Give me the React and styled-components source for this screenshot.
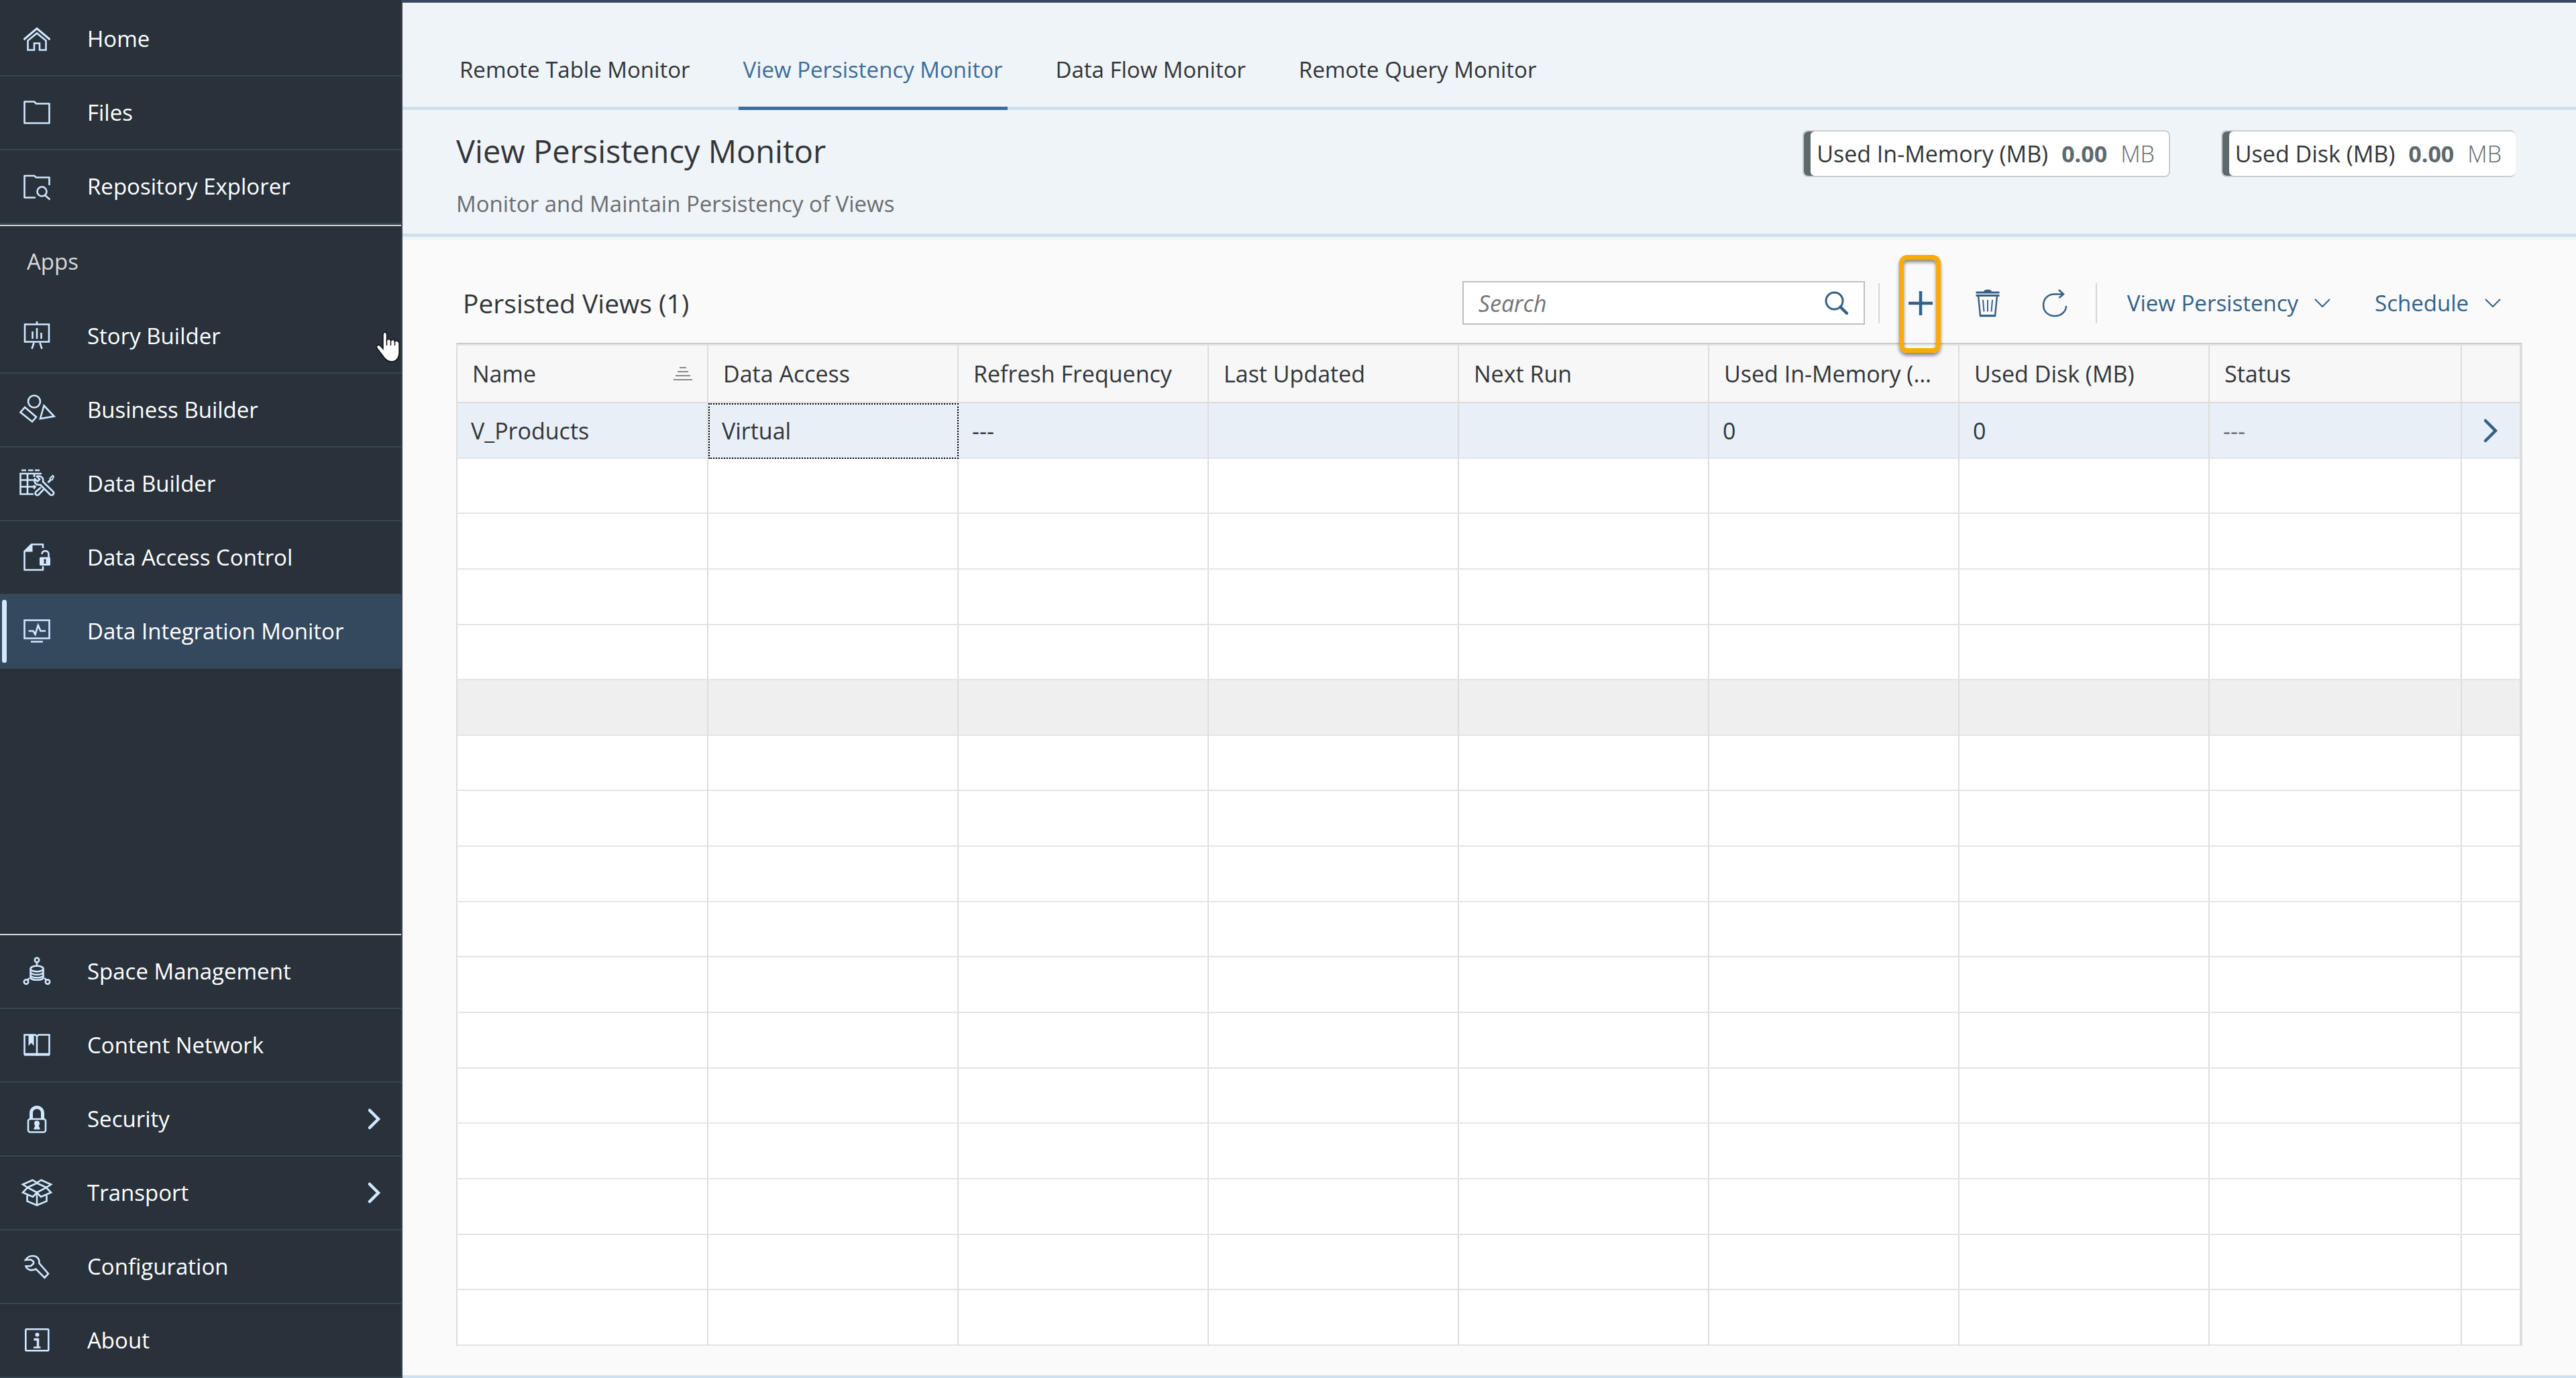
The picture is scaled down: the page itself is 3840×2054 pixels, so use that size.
import React from "react";
import styled, { createGlobalStyle } from "styled-components";

const GlobalStyle = createGlobalStyle`
  *, *::before, *::after { box-sizing: border-box; }
  body {
    margin: 0;
    font-family: "Open Sans", "Noto Sans", sans-serif;
    font-size: 33px;
    line-height: 46px;
    color: #323538;
    background: #fafafa;
  }
  button, input { font: inherit; color: inherit; }
`;

/* ---------- shell ---------- */

const Shell = styled.div`
  display: flex;
  height: 100vh;
  overflow: hidden;
`;

const Sidebar = styled.nav`
  flex: 0 0 600px;
  display: flex;
  flex-direction: column;
  justify-content: space-between;
  padding-top: 4px;
  background: #29313a;
  border-right: 2px solid #3a4552;
`;

const NavGroup = styled.div`
  display: flex;
  flex-direction: column;
  border-top: ${(p) => (p.$ruled ? "2px solid #d9d9d9" : "0")};
  margin-top: ${(p) => (p.$spaced ? "1px" : "0")};
`;

const NavHeading = styled.div`
  height: 110px;
  padding: 30px 40px;
  color: #d9d9d9;
`;

const NavLink = styled.a`
  position: relative;
  display: flex;
  align-items: center;
  gap: 47px;
  height: 110px;
  padding: 0 29px 0 27px;
  border-bottom: 2px solid #3a4552;
  background: ${(p) => (p.$active ? "#34495e" : "transparent")};
  color: #fff;
  text-decoration: none;

  &::before {
    content: "";
    display: ${(p) => (p.$active ? "block" : "none")};
    position: absolute;
    left: 3px;
    top: 7px;
    bottom: 7px;
    width: 7px;
    border-radius: 4px;
    background: #d1e8ff;
  }
`;

const NavLabel = styled.span`
  flex: 1;
  white-space: nowrap;
`;

const NavIcon = styled.svg`
  flex: none;
  width: 56px;
  height: 48px;
  fill: none;
  stroke: #d1e8ff;
  stroke-width: 2.6;
  .solid { fill: #d1e8ff; stroke: none; }
  .cut { fill: #29313a; stroke: none; }
  .cutline { fill: #29313a; }
  .heavy { stroke-width: 5; }
`;

const ExpandIcon = styled.svg`
  flex: none;
  width: 22px;
  height: 34px;
  fill: none;
  stroke: #d1e8ff;
`;

const Pointer = styled.svg`
  position: absolute;
  right: 0;
  top: 46px;
  width: 40px;
  height: 50px;
`;

/* ---------- main area ---------- */

const Main = styled.main`
  flex: 1;
  min-width: 0;
  display: flex;
  flex-direction: column;
  border-top: 4px solid #354a5f;
  border-bottom: 4px solid #d1e0ee;
`;

const TabBar = styled.div`
  display: flex;
  gap: 65px;
  padding-left: 78px;
  background: #eff4f9;
  box-shadow: inset 0 -5px #d1e0ee;
`;

const Tab = styled.button`
  padding: 77px 7px 32px;
  border: 0;
  border-bottom: 5px solid ${(p) => (p.$active ? "#3c6e99" : "transparent")};
  background: none;
  color: ${(p) => (p.$active ? "#3c6e99" : "#323538")};
  white-space: nowrap;
`;

const PageHeader = styled.header`
  display: flex;
  justify-content: space-between;
  align-items: flex-start;
  padding: 29px 90px 21px 80px;
  background: #eff4f9;
  border-bottom: 5px solid #d1e0ee;
  box-shadow: 0 5px #eff4f9;
`;

const Title = styled.h1`
  margin: 0;
  font-size: 47px;
  line-height: 64px;
  font-weight: 400;
`;

const Subtitle = styled.p`
  margin: 24px 0 0;
  color: #6a6d70;
`;

const Tags = styled.div`
  display: flex;
  gap: 76px;
`;

const Tag = styled.div`
  display: flex;
  align-items: center;
  gap: 20px;
  height: 70px;
  margin-top: 1px;
  padding: 0 21px 0 19px;
  border: 2px solid #c9cdd1;
  border-right-width: ${(p) => (p.$open ? "0" : "2px")};
  border-radius: 8px;
  background: #fff;
  box-shadow: inset 10px 0 #5e696e;
  font-size: 34px;
  white-space: nowrap;
`;

const TagValue = styled.strong`
  font-weight: 700;
  color: #5e696e;
`;

const TagUnit = styled.span`
  font-weight: 300;
  color: #5e696e;
`;

/* ---------- table panel ---------- */

const Panel = styled.section`
  flex: 1;
  min-height: 0;
  display: flex;
  flex-direction: column;
  padding: 66px 80px 44px;
`;

const Toolbar = styled.div`
  display: flex;
  align-items: center;
  height: 65px;
  margin-bottom: 27px;
`;

const PanelTitle = styled.h2`
  flex: 1;
  margin: 0;
  padding-left: 10px;
  font-size: 39px;
  font-weight: 400;
`;

const SearchBox = styled.label`
  display: flex;
  align-items: center;
  width: 600px;
  height: 65px;
  margin-right: 9px;
  padding: 0 20px 0 22px;
  border: 2px solid #bfbfbf;
  background: #fff;
`;

const SearchInput = styled.input`
  flex: 1;
  min-width: 0;
  padding: 0;
  border: 0;
  outline: 0;
  background: none;
  font-size: 34px;
  &::placeholder { font-style: italic; color: #757575; opacity: 1; }
`;

const ToolIcon = styled.svg`
  display: block;
  flex: none;
  width: ${(p) => p.$w || 40}px;
  height: ${(p) => p.$h || 44}px;
  fill: none;
  stroke: #346187;
  .solid { fill: #346187; stroke: none; }
`;

const Divider = styled.span`
  width: 2px;
  height: 60px;
  margin: 0 11px;
  background: #d3d8dc;
`;

const IconButton = styled.button`
  position: relative;
  display: flex;
  align-items: center;
  justify-content: center;
  width: 100px;
  height: 65px;
  padding: 0;
  border: 0;
  background: none;
`;

const Highlight = styled.span`
  position: absolute;
  left: 18px;
  top: -39px;
  width: 62px;
  height: 146px;
  border: 7px solid #f9ab06;
  border-radius: 12px;
  box-shadow: 0 4px 5px rgba(0, 0, 0, 0.45), inset 0 4px 5px rgba(0, 0, 0, 0.45);
`;

const MenuButton = styled.button`
  display: flex;
  align-items: center;
  gap: 24px;
  height: 65px;
  padding: 0 32px 0 34px;
  border: 0;
  background: none;
  color: #346187;
  white-space: nowrap;
`;

const TableFrame = styled.div`
  flex: 1;
  min-height: 0;
  border: 2px solid #ddd;
  border-top-color: #ccc;
  border-bottom: 0;
  background: #fff;
`;

const Table = styled.table`
  width: 100%;
  height: 100%;
  table-layout: fixed;
  border-collapse: separate;
  border-spacing: 0;
  font-size: 34px;
`;

const Col = styled.col`
  width: ${(p) => p.$w};
`;

const HeadCell = styled.th`
  height: 88px;
  padding: 0 22px;
  border-top: 2px solid #e5e5e5;
  border-right: 2px solid #ddd;
  border-bottom: 2px solid #ddd;
  background: #f7f7f7;
  font-weight: 400;
  text-align: left;
  white-space: nowrap;
  overflow: hidden;
  text-overflow: ellipsis;
`;

const HeadSplit = styled.div`
  display: flex;
  align-items: center;
  justify-content: space-between;
`;

const Row = styled.tr`
  background: ${(p) => p.$bg || "#fff"};
`;

const Cell = styled.td`
  height: 82px;
  padding: 2px 20px 0;
  border-right: 2px solid #ddd;
  border-bottom: 2px solid #e4e4e4;
  color: ${(p) => (p.$muted ? "#6a6d70" : "inherit")};
  outline: ${(p) => (p.$focused ? "2px dotted #000" : "none")};
  outline-offset: -2px;
`;

const RowButton = styled.button`
  display: block;
  margin: 0 auto;
  padding: 0;
  border: 0;
  background: none;
`;

/* ---------- icons ---------- */

const icons = {
  home: (
    <>
      <path d="M8.5 25 28 8.5 47.5 25" strokeWidth="3" />
      <path d="M24 40.5H14.5V26.5L28 15.5 41.5 26.5V40.5H32V30.5H24Z" />
    </>
  ),
  files: <path d="M9.5 7.5H24L27 10.5H46.5V39.5H9.5Z" strokeLinejoin="round" />,
  repository: (
    <>
      <path d="M46.5 22V10.5H27L24 8H9.5V40.5H26" strokeLinejoin="round" />
      <circle cx="35.5" cy="31.5" r="7" />
      <path d="M40 37 47.5 43.5" />
    </>
  ),
  story: (
    <>
      <path d="M10 6.5H46V32.5H10ZM28 2V6M23.5 34 20.5 43M32.5 34 35.5 43" />
      <path d="M21.5 17V28M28 12V28M34.5 19V28" />
    </>
  ),
  business: (
    <>
      <circle cx="24" cy="11.5" r="9" />
      <path d="M10 20 27 34.5 21 41.5 3.5 27.5ZM38.5 17.5 53.5 33.5 33 37Z" />
    </>
  ),
  builder: (
    <>
      <path d="M5 4H12M15 4H22.5M25 4H32" />
      <path d="M35 9H3.5V39.5H23M3.5 18.5H24M3.5 28.5H27M14 9V39.5M24 9V14M24 26V32" />
      <path d="M44 22 48 18 47.5 16 51.5 12 53 13.5 51 18 49 18.5 45 22.5" strokeWidth="2" />
      <path d="M34 29.5 26.5 36C24 39 27.5 42.5 30.5 40.5L38 32.5" className="cutline" />
      <path
        d="M28 13C33 11.5 38.5 14.5 37 21L52.5 36C54.5 39 51 42.5 48 40.5L33 25.5C27 27 23 22 25 17L29 20.5 32 17.5Z"
        className="cutline"
      />
    </>
  ),
  access: (
    <>
      <path d="M37 10V4.5H20L9.5 15V42.5H37V37" strokeLinejoin="round" />
      <path d="M8.5 15.5 20 4H21.5V15.5Z" className="solid" />
      <path d="M45.5 24V19C45.5 12.5 35.5 12.5 35.5 19" />
      <rect x="32" y="23.5" width="16" height="12.5" rx="1.5" className="solid" />
      <circle cx="40" cy="28" r="1.8" className="cut" />
      <path d="M39.2 28H40.8L41.8 33H38.2Z" className="cut" />
    </>
  ),
  monitor: (
    <>
      <path d="M9.5 7.5H46.5V34.5H9.5ZM19 39.5H37" />
      <path d="M15.5 23.5H22.5L25.5 28.5 29.8 15 33.5 23.5H41" />
    </>
  ),
  space: (
    <>
      <circle cx="28" cy="7" r="3.2" />
      <path d="M28 10.5V15M17 34 14 36.5M39 34 42 36.5" />
      <ellipse cx="28" cy="20" rx="9.5" ry="4.2" />
      <path d="M18.5 20V33C18.5 38 37.5 38 37.5 33V20M18.5 25C20 30 36 30 37.5 25M18.5 29.5C20 34.5 36 34.5 37.5 29.5" />
      <circle cx="12" cy="39.5" r="3.2" />
      <circle cx="44" cy="39.5" r="3.2" />
    </>
  ),
  content: (
    <>
      <path d="M28 10.5 25.5 8.5H9.5V37H26L28 38.5 30 37H46.5V8.5H30.5L28 10.5V38" />
      <path d="M9 38H47" strokeWidth="3.5" />
      <path d="M15.5 8H23.5V25L19.5 20.5 15.5 25Z" className="solid" />
    </>
  ),
  security: (
    <>
      <path d="M19.5 23V15.5C19.5 3.5 36.5 3.5 36.5 15.5V23" className="heavy" />
      <rect x="15" y="24" width="26" height="19.5" rx="3" />
      <circle cx="28" cy="30.5" r="4" className="solid" />
      <path d="M26.5 31H29.5L33 39.5H23Z" className="solid" />
    </>
  ),
  transport: (
    <>
      <path d="M14 16 7 11.5 21.5 5 28 9 34.5 5 49 11.5 42 16 28 9.5Z" />
      <path d="M14 16 28 23.5 42 16 49 23.5 34 30 28 23.5 22 30 7 23.5Z" />
      <path d="M13.5 27.5V36.5L28 42.5 42.5 36.5V27.5M28 24V42" />
    </>
  ),
  configuration: (
    <path d="M11 14C14 9.5 18 8 21.5 8 28 8 32 12 31.5 19L45 34.5 39.5 40.5 26.5 27.5C20 31 13 28.5 11.5 23.5L19 23 23 19.5V16.5L19 13.5Z" />
  ),
  about: (
    <>
      <rect x="11.3" y="7.3" width="34" height="32" rx="1" />
      <circle cx="28.5" cy="15.5" r="3" className="solid" />
      <path d="M23.5 22.5H29.5V34" strokeWidth="3.5" />
      <path d="M23 34.5H33.5" />
    </>
  ),
};

const NavChevron = () => (
  <ExpandIcon viewBox="0 0 22 34" aria-hidden="true">
    <path d="M4 4 17 17 4 30" strokeWidth="4.5" strokeLinecap="round" />
  </ExpandIcon>
);

const MenuChevron = () => (
  <ToolIcon $w={24} $h={14} viewBox="0 0 24 14" aria-hidden="true">
    <path d="M1 1 12 12 23 1" strokeWidth="2" />
  </ToolIcon>
);

/* ---------- data ---------- */

const topLinks = [
  ["home", "Home"],
  ["files", "Files"],
  ["repository", "Repository Explorer"],
];
const appLinks = [
  ["story", "Story Builder"],
  ["business", "Business Builder"],
  ["builder", "Data Builder"],
  ["access", "Data Access Control"],
  ["monitor", "Data Integration Monitor"],
];
const adminLinks = [
  ["space", "Space Management"],
  ["content", "Content Network"],
  ["security", "Security", true],
  ["transport", "Transport", true],
  ["configuration", "Configuration"],
  ["about", "About"],
];
const tabs = [
  "Remote Table Monitor",
  "View Persistency Monitor",
  "Data Flow Monitor",
  "Remote Query Monitor",
];
const columns = [
  "Data Access",
  "Refresh Frequency",
  "Last Updated",
  "Next Run",
  "Used In-Memory (MB)",
  "Used Disk (MB)",
  "Status",
];
const emptyRows = Array.from({ length: 16 }, (_, i) => i);
const HOVERED_ROW = 4;

const NavItem = ({ icon, label, expandable, active, children }) => (
  <NavLink href="#" $active={active} aria-current={active ? "page" : undefined}>
    <NavIcon viewBox="0 0 56 48" aria-hidden="true">{icons[icon]}</NavIcon>
    <NavLabel>{label}</NavLabel>
    {expandable && <NavChevron />}
    {children}
  </NavLink>
);

export default function App() {
  return (
    <>
      <GlobalStyle />
      <Shell>
        <Sidebar>
          <div>
            <NavGroup>
              {topLinks.map(([icon, label]) => (
                <NavItem key={icon} icon={icon} label={label} />
              ))}
            </NavGroup>
            <NavGroup $ruled $spaced>
              <NavHeading>Apps</NavHeading>
              {appLinks.map(([icon, label]) => (
                <NavItem key={icon} icon={icon} label={label} active={icon === "monitor"}>
                  {icon === "story" && (
                    <Pointer viewBox="0 0 40 50" aria-hidden="true">
                      <path
                        d="M13 6C13 1 18.5 1 18.5 6V14C20 11.5 24 12 24.5 15 26.5 12.5 30 13.5 30.5 16 33 14 37 15.5 37 19V32C37 40 33 46 26 46 20 46 17 44 14 39L4 26C2 22 6 20 9 22.5L13 27Z"
                        fill="#fff"
                        stroke="#10131c"
                        strokeWidth="1.5"
                      />
                      <path d="M18.5 13V22M24.5 15V22M30.5 16V22" stroke="#10131c" strokeWidth="1.5" />
                    </Pointer>
                  )}
                </NavItem>
              ))}
            </NavGroup>
          </div>
          <NavGroup $ruled>
            {adminLinks.map(([icon, label, expandable]) => (
              <NavItem key={icon} icon={icon} label={label} expandable={expandable} />
            ))}
          </NavGroup>
        </Sidebar>

        <Main>
          <TabBar role="tablist">
            {tabs.map((tab, i) => (
              <Tab key={tab} role="tab" aria-selected={i === 1} $active={i === 1}>
                {tab}
              </Tab>
            ))}
          </TabBar>
          <PageHeader>
            <div>
              <Title>View Persistency Monitor</Title>
              <Subtitle>Monitor and Maintain Persistency of Views</Subtitle>
            </div>
            <Tags>
              <Tag>
                <span>Used In-Memory (MB)</span>
                <TagValue>0.00</TagValue>
                <TagUnit>MB</TagUnit>
              </Tag>
              <Tag $open>
                <span>Used Disk (MB)</span>
                <TagValue>0.00</TagValue>
                <TagUnit>MB</TagUnit>
              </Tag>
            </Tags>
          </PageHeader>

          <Panel>
            <Toolbar>
              <PanelTitle>Persisted Views (1)</PanelTitle>
              <SearchBox>
                <SearchInput type="text" placeholder="Search" aria-label="Search" />
                <ToolIcon $w={40} $h={40} viewBox="0 0 40 40" aria-hidden="true">
                  <circle cx="16.5" cy="16.5" r="12.5" strokeWidth="3" />
                  <path d="M25.5 25.5 35 35" strokeWidth="4.5" strokeLinecap="round" />
                </ToolIcon>
              </SearchBox>
              <Divider />
              <IconButton aria-label="Add">
                <ToolIcon viewBox="0 0 40 44" aria-hidden="true">
                  <path d="M20 4V40M2 22H38" strokeWidth="4.5" />
                </ToolIcon>
                <Highlight />
              </IconButton>
              <IconButton aria-label="Delete">
                <ToolIcon viewBox="0 0 40 44" aria-hidden="true">
                  <path d="M14 4.5C15 0.5 25 0.5 26 4.5H37.5V7.5H2.5V4.5Z" className="solid" />
                  <path d="M2.5 10.5H37.5" strokeWidth="3" />
                  <path d="M6 11 9 41H31L34 11" strokeWidth="2.5" />
                  <path d="M8.5 40.5H31.5" strokeWidth="3" />
                  <path d="M13 17 14.5 34.5M20 17V34.5M27 17 25.5 34.5" strokeWidth="2" />
                </ToolIcon>
              </IconButton>
              <IconButton aria-label="Refresh">
                <ToolIcon viewBox="0 0 40 44" aria-hidden="true">
                  <path d="M33 8.5H20C9 8.5 3 16 3 25 3 34 10 41 20 41 30 41 37 34 37 26" strokeWidth="2.5" />
                  <path d="M26 2 33 8.5 26.5 14" strokeWidth="2.5" />
                </ToolIcon>
              </IconButton>
              <Divider />
              <MenuButton aria-haspopup="menu">
                View Persistency
                <MenuChevron />
              </MenuButton>
              <MenuButton aria-haspopup="menu">
                Schedule
                <MenuChevron />
              </MenuButton>
            </Toolbar>

            <TableFrame>
              <Table>
                <colgroup>
                  <Col $w="374px" />
                  {columns.slice(0, 6).map((c) => (
                    <Col key={c} $w="373px" />
                  ))}
                  <Col $w="auto" />
                  <Col $w="88px" />
                </colgroup>
                <thead>
                  <tr>
                    <HeadCell aria-sort="ascending">
                      <HeadSplit>
                        Name
                        <ToolIcon $w={28} $h={20} viewBox="0 0 28 20" aria-hidden="true">
                          <path
                            d="M9 1H19M6 7H22M3 13H25M0 19H28"
                            stroke="#888"
                            strokeWidth="2"
                          />
                        </ToolIcon>
                      </HeadSplit>
                    </HeadCell>
                    {columns.map((c) => (
                      <HeadCell key={c}>{c}</HeadCell>
                    ))}
                    <HeadCell as="td" />
                  </tr>
                </thead>
                <tbody>
                  <Row $bg="#e8eff7">
                    <Cell>V_Products</Cell>
                    <Cell $focused>Virtual</Cell>
                    <Cell>---</Cell>
                    <Cell />
                    <Cell />
                    <Cell>0</Cell>
                    <Cell>0</Cell>
                    <Cell $muted>---</Cell>
                    <Cell>
                      <RowButton aria-label="Open details">
                        <ToolIcon $w={24} $h={38} viewBox="0 0 24 38" aria-hidden="true">
                          <path d="M4 4 19 19 4 34" strokeWidth="4.5" strokeLinecap="round" />
                        </ToolIcon>
                      </RowButton>
                    </Cell>
                  </Row>
                  {emptyRows.map((r) => (
                    <Row key={r} $bg={r === HOVERED_ROW ? "#efefef" : undefined}>
                      <Cell />
                      {columns.map((c) => (
                        <Cell key={c} />
                      ))}
                      <Cell />
                    </Row>
                  ))}
                </tbody>
              </Table>
            </TableFrame>
          </Panel>
        </Main>
      </Shell>
    </>
  );
}
